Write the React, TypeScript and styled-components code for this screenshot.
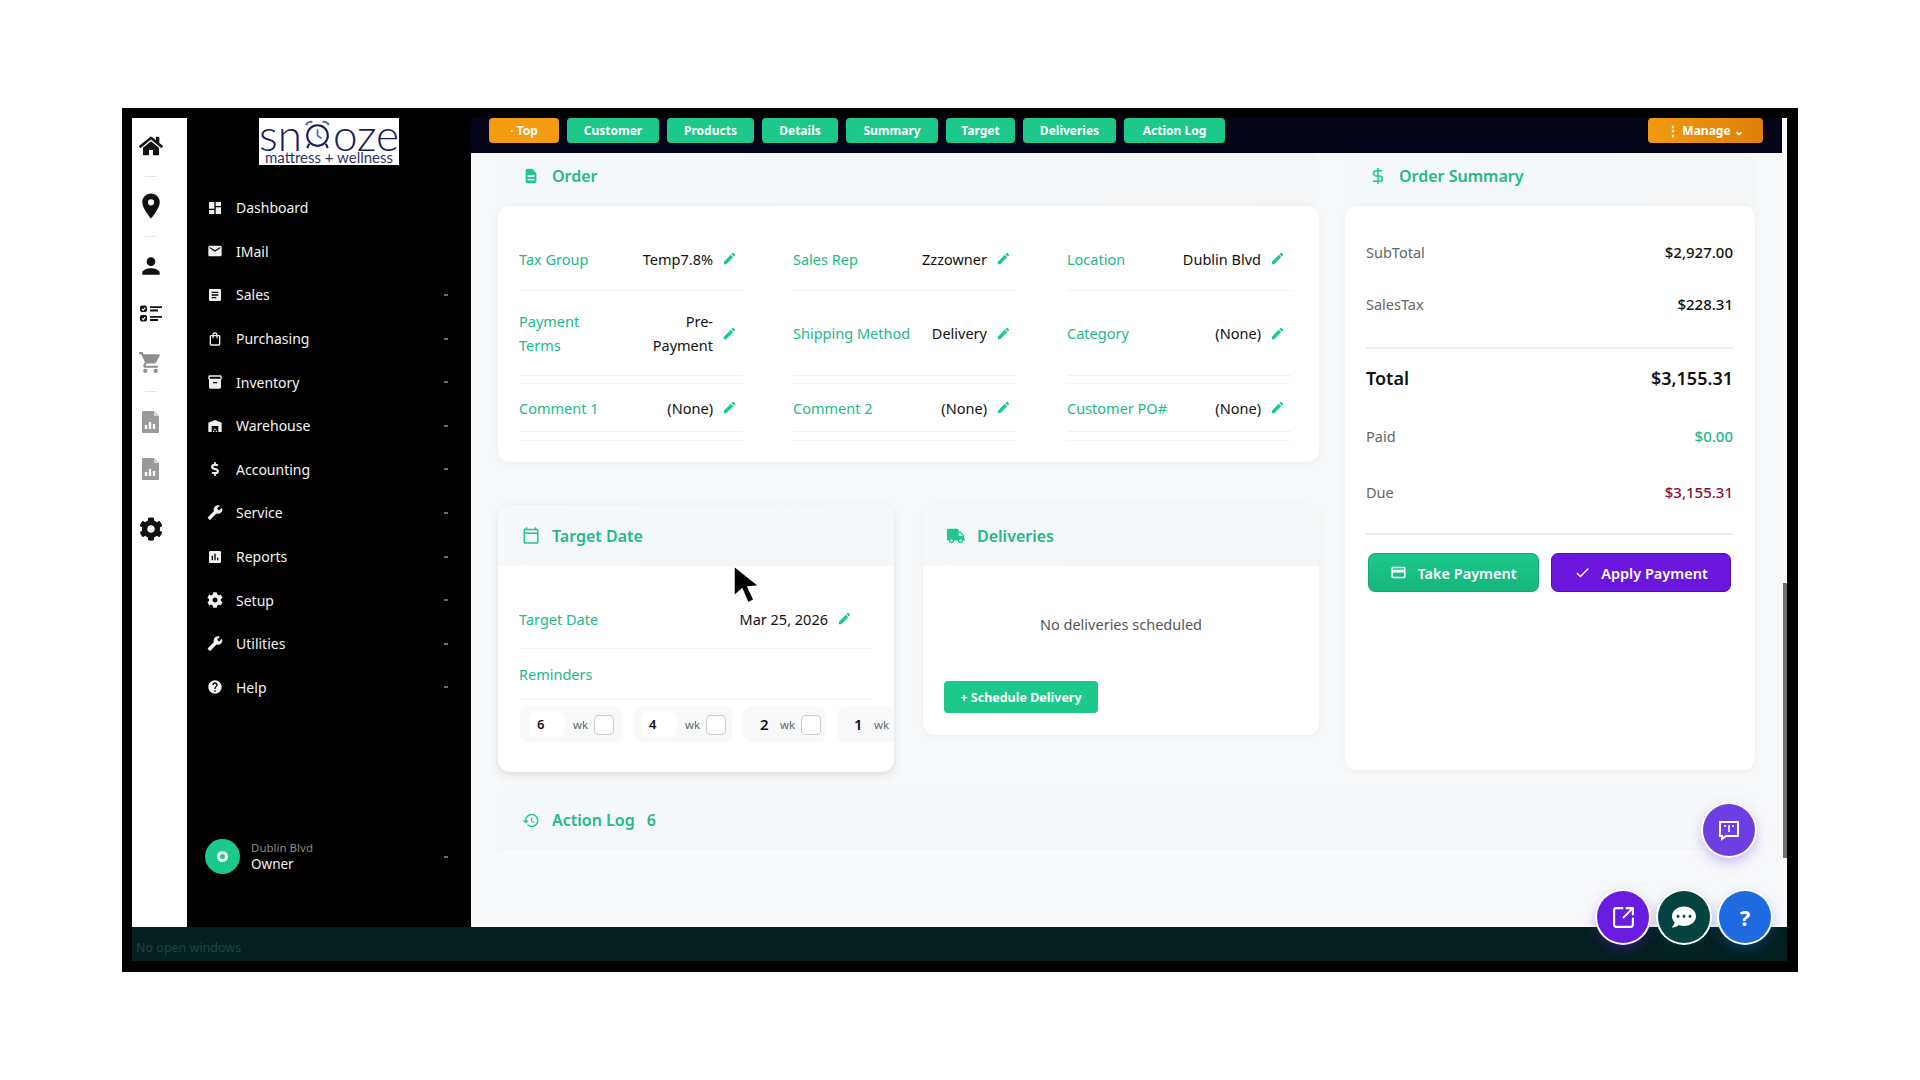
import React from "react";
import styled, { createGlobalStyle } from "styled-components";
import {
  MdDashboard, MdEmail, MdArticle, MdOutlineShoppingBag, MdInventory2, MdWarehouse, MdBuild,
  MdAssessment, MdHelp, MdEdit, MdShoppingCart, MdLocationOn, MdPerson, MdHistory, MdCreditCard,
  MdCheck, MdOutlineCalendarToday,
} from "react-icons/md";
import { FaCog, FaHome, FaTruck, FaDollarSign, FaCommentDots } from "react-icons/fa";
import { HiDocumentText } from "react-icons/hi";
import { LuDollarSign, LuSquareArrowOutUpRight } from "react-icons/lu";

const green = "#1cc88a";
const labelGreen = "#22b98a";
const font = `"Noto Sans", "Open Sans", sans-serif`;

const Global = createGlobalStyle`
  html, body { margin: 0; padding: 0; background: #fff; overflow: hidden; }
  body { font-family: ${font}; }
  * { box-sizing: border-box; }
`;

const Page = styled.div`
  width: 1920px;
  height: 1080px;
  padding: 108px 0 0 122px;
  background: #fff;
`;
const Frame = styled.div`
  position: relative;
  width: 1676px;
  height: 864px;
  padding: 10px 11px 11px 10px;
  background: #000;
  display: flex;
  flex-direction: column;
`;
const Upper = styled.div`
  display: flex;
  height: 809px;
`;
const Rail = styled.nav`
  width: 55px;
  background: #fff;
  display: flex;
  flex-direction: column;
  align-items: center;
  padding-right: 18px;
`;
const RailIcon = styled.div<{ $top: number; $faded?: boolean }>`
  margin-top: ${(p) => p.$top}px;
  height: 26px;
  display: flex;
  align-items: center;
  justify-content: center;
  color: ${(p) => (p.$faded ? "#8e8e8e" : "#111")};
`;
const RailRule = styled.div<{ $top: number }>`
  margin-top: ${(p) => p.$top}px;
  width: 12px;
  height: 1px;
  background: #e6e6e6;
`;
const Sidebar = styled.aside`
  width: 284px;
  background: #000;
  display: flex;
  flex-direction: column;
`;
const Logo = styled.div`
  align-self: flex-start;
  margin: 0 0 21px 72px;
  width: 140px;
  height: 47px;
  background: #fff;
  color: #1b1b5c;
  display: flex;
  flex-direction: column;
  align-items: center;
  overflow: hidden;
`;
const LogoWord = styled.div`
  display: flex;
  align-items: center;
  height: 32px;
  font: 300 44px/32px Lato, sans-serif;
`;
const LogoTag = styled.div`
  font: 400 15px/15px Lato, sans-serif;
  color: #33335f;
`;
const Menu = styled.ul`
  list-style: none;
  margin: 0;
  padding: 0;
`;
const MenuItem = styled.li`
  height: 43.6px;
  display: flex;
  align-items: center;
  padding: 0 23px 0 20px;
  color: #f4f4f4;
  font-size: 14px;
`;
const MenuIcon = styled.span`
  width: 16px;
  margin-right: 13px;
  display: flex;
  align-items: center;
  justify-content: center;
  color: #f0f0f0;
`;
const MenuLabel = styled.span`
  flex: 1;
`;
const Caret = styled.span`
  width: 4px;
  height: 2px;
  background: #6b6b6b;
`;
const UserBox = styled.div`
  margin-top: auto;
  padding: 0 23px 53px 18px;
  display: flex;
  align-items: center;
`;
const Avatar = styled.div`
  width: 35px;
  height: 35px;
  border-radius: 50%;
  background: ${green};
  display: flex;
  align-items: center;
  justify-content: center;
  margin-right: 11px;
`;
const AvatarDot = styled.div`
  width: 11px;
  height: 11px;
  border-radius: 50%;
  border: 3px solid #fff;
`;
const UserText = styled.div`
  flex: 1;
  display: flex;
  flex-direction: column;
`;
const UserPlace = styled.span`
  font-size: 11.5px;
  line-height: 16px;
  color: #8b8b8b;
`;
const UserRole = styled.span`
  font-size: 13.5px;
  line-height: 17px;
  color: #efefef;
`;
const Main = styled.main`
  flex: 1;
  min-width: 0;
  background: #f8f9fa;
  display: flex;
  flex-direction: column;
  border-bottom: 2px solid #fff;
  position: relative;
`;
const ScrollThumb = styled.div`
  position: absolute;
  right: 0;
  top: 465px;
  width: 4px;
  height: 275px;
  background: #6f6f6f;
`;
const TopBar = styled.header`
  height: 35px;
  margin-right: 5px;
  background: #05051a;
  display: flex;
  align-items: flex-start;
  padding-left: 18px;
  padding-right: 19px;
  gap: 8px;
`;
const NavButton = styled.button<{ $w: number; $orange?: boolean }>`
  width: ${(p) => p.$w}px;
  height: 25px;
  border: 0;
  border-radius: 4px;
  padding: 0;
  background: ${(p) => (p.$orange ? "#f39c12" : green)};
  color: #fff;
  font: 700 12px/25px ${font};
  text-align: center;
`;
const ManageButton = styled(NavButton)`
  margin-left: auto;
  background: linear-gradient(90deg, #f09a10, #dd800a);
`;
const Content = styled.div`
  flex: 1;
  padding: 0 27px;
  display: grid;
  grid-template-columns: 821px 410px;
  grid-template-rows: 309px 310px 1fr;
  column-gap: 26px;
  align-content: start;
`;
const OrderCard = styled.section`
  grid-column: 1;
  grid-row: 1;
  height: 309px;
`;
const SummaryCard = styled.section`
  grid-column: 2;
  grid-row: 1 / span 2;
  height: 617px;
  display: flex;
  flex-direction: column;
`;
const CardHead = styled.div<{ $h?: number; $nudge?: number }>`
  height: ${(p) => p.$h ?? 53}px;
  padding: 0 0 ${(p) => p.$nudge ?? 0}px 24px;
  background: linear-gradient(90deg, #f5f9fb, #f4f6f8);
  color: ${labelGreen};
  display: flex;
  align-items: center;
  font-size: 16px;
  font-weight: 600;
  border-radius: 12px 12px 0 0;
`;
const HeadIcon = styled.span`
  width: 18px;
  margin-right: 12px;
  display: flex;
  justify-content: center;
  color: ${green};
`;
const LogCount = styled.span`
  margin-left: 12px;
`;
const CardBody = styled.div`
  background: #fff;
  border-radius: 12px;
`;
const OrderBody = styled(CardBody)`
  height: 256px;
  padding: 21px 28px 0 21px;
  box-shadow: 0 1px 6px rgba(40, 50, 60, 0.06);
  display: grid;
  grid-template-columns: repeat(3, 224px);
  grid-template-rows: 64px 85px 56px;
  column-gap: 50px;
  align-items: stretch;
`;
const Field = styled.div<{ $last?: boolean }>`
  display: flex;
  align-items: center;
  padding-right: 6px;
  border-bottom: 1px solid #f1f2f4;
  font-size: 14.5px;
  ${(p) =>
    p.$last
      ? `margin-top: 7px; border-top: 1px solid #f4f5f6; box-shadow: 0 8px 0 0 #fff, 0 9px 0 0 #f4f5f6;`
      : ""}
`;
const Label = styled.span`
  color: ${labelGreen};
  line-height: 24px;
  white-space: pre-line;
  flex-shrink: 0;
`;
const Value = styled.span`
  flex: 1;
  text-align: right;
  color: #111;
  line-height: 24px;
  white-space: pre-line;
`;
const Pencil = styled.span`
  margin-left: 9px;
  width: 15px;
  display: flex;
  color: ${green};
`;
const LowerRow = styled.div`
  grid-column: 1;
  grid-row: 2;
  padding-top: 43px;
  display: grid;
  grid-template-columns: 396px 396px;
  column-gap: 29px;
  align-items: start;
`;
const TargetCard = styled.section`
  height: 267px;
  overflow: hidden;
  background: #fff;
  border-radius: 12px;
  box-shadow: 0 3px 10px rgba(40, 50, 60, 0.14);
`;
const DeliveriesCard = styled.section`
  height: 230px;
  background: #fff;
  border-radius: 12px;
  box-shadow: 0 1px 6px rgba(40, 50, 60, 0.06);
`;
const TargetField = styled.div`
  margin: 23px 21px 0 21px;
  height: 60px;
  display: flex;
  align-items: center;
  padding: 0 21px 0 0;
  font-size: 14.5px;
  border-bottom: 1px solid #f3f4f5;
`;
const ReminderLabel = styled.div`
  margin: 0 21px;
  height: 51px;
  display: flex;
  align-items: center;
  color: ${labelGreen};
  font-size: 14.5px;
  border-bottom: 1px solid #f1f2f4;
`;
const Chips = styled.div`
  margin: 7px 0 0 22px;
  display: flex;
  overflow: hidden;
  gap: 11px;
`;
const Chip = styled.div<{ $w: number; $pad: number }>`
  flex: 0 0 ${(p) => p.$w}px;
  height: 35px;
  padding-left: ${(p) => p.$pad}px;
  display: flex;
  align-items: center;
  background: #f7f9fa;
  border-radius: 8px;
`;
const NumBox = styled.span<{ $boxed?: boolean }>`
  width: ${(p) => (p.$boxed ? 35 : 15)}px;
  height: 25px;
  margin-right: ${(p) => (p.$boxed ? 8 : 9)}px;
  padding-left: ${(p) => (p.$boxed ? 7 : 4)}px;
  border-radius: 6px;
  background: ${(p) => (p.$boxed ? "#fff" : "transparent")};
  color: #111;
  font-size: ${(p) => (p.$boxed ? 13 : 15)}px;
  font-weight: 600;
  line-height: 25px;
`;
const Unit = styled.span`
  font-size: 11.5px;
  color: #666;
  margin-right: 6px;
`;
const CheckBox = styled.span`
  flex: 0 0 20px;
  width: 20px;
  height: 20px;
  border-radius: 4px;
  background: #fff;
  border: 1px solid #c9ced3;
`;
const EmptyText = styled.div`
  height: 115px;
  display: flex;
  align-items: center;
  justify-content: center;
  color: #555;
  font-size: 14.5px;
`;
const ScheduleButton = styled.button`
  display: block;
  margin: 0 0 0 21px;
  width: 154px;
  height: 32px;
  border: 0;
  border-radius: 4px;
  background: ${green};
  color: #fff;
  font: 700 12.5px ${font};
`;
const SummaryBody = styled(CardBody)`
  flex: 1;
  padding: 22px 22px 0 21px;
  box-shadow: 0 1px 6px rgba(40, 50, 60, 0.05);
`;
const SummaryRow = styled.div<{ $h: number; $rule?: boolean; $lift?: number }>`
  height: ${(p) => p.$h}px;
  padding-bottom: ${(p) => p.$lift ?? 0}px;
  display: flex;
  align-items: center;
  justify-content: space-between;
  ${(p) => (p.$rule ? "border-bottom: 2px solid #eceef0;" : "")}
`;
const SummaryLabel = styled.span<{ $big?: boolean }>`
  font-size: ${(p) => (p.$big ? 18 : 14.5)}px;
  font-weight: ${(p) => (p.$big ? 600 : 400)};
  color: ${(p) => (p.$big ? "#111" : "#666")};
`;
const SummaryValue = styled.span<{ $big?: boolean; $color?: string }>`
  font-size: ${(p) => (p.$big ? 18 : 15)}px;
  font-weight: ${(p) => (p.$big ? 600 : 500)};
  color: ${(p) => p.$color ?? "#111"};
`;
const PayRow = styled.div`
  display: flex;
  gap: 12px;
  margin-top: 18px;
  padding-left: 2px;
`;
const PayButton = styled.button<{ $purple?: boolean }>`
  height: 39px;
  width: ${(p) => (p.$purple ? 180 : 171)}px;
  border-radius: 7px;
  border: 1px solid ${(p) => (p.$purple ? "#4c12b0" : "#14a974")};
  background: ${(p) => (p.$purple ? "#6a16dc" : "linear-gradient(180deg,#1cc88a,#17b57c)")};
  color: #fff;
  font: 600 14.5px ${font};
  display: flex;
  align-items: center;
  justify-content: center;
  gap: 10px;
`;
const LogBar = styled(CardHead)`
  grid-column: 1 / span 2;
  grid-row: 3;
  margin-top: 20px;
  height: 56px;
  background: linear-gradient(90deg, #f5f9fb, #f6f8f9);
  box-shadow: 0 1px 3px rgba(40, 50, 60, 0.04);
`;
const BottomBar = styled.footer`
  height: 34px;
  background: #03201f;
  color: #1c4743;
  font-size: 12.5px;
  line-height: 34px;
  padding: 4px 0 0 4px;
`;
const Fab = styled.div<{ $x: number; $y: number; $bg: string }>`
  position: absolute;
  left: ${(p) => p.$x - 122 - 26}px;
  top: ${(p) => p.$y - 108 - 26}px;
  width: 52px;
  height: 52px;
  border-radius: 50%;
  background: ${(p) => p.$bg};
  box-shadow: 0 0 0 2px #fff, 0 5px 14px ${(p) => p.$bg}66;
  color: #fff;
  display: flex;
  align-items: center;
  justify-content: center;
  font: 700 22px ${font};
`;
const Cursor = styled.svg`
  position: absolute;
  left: ${732 - 122}px;
  top: ${565 - 108}px;
`;

const ReportIcon = () => (
  <svg width="20" height="24" viewBox="0 0 20 24" fill="none">
    <path d="M2 1h11l5 5v16a1 1 0 0 1-1 1H2a1 1 0 0 1-1-1V2a1 1 0 0 1 1-1z" fill="#9a9a9a" />
    <path d="M13 1l5 5h-5z" fill="#d5d5d5" />
    <path d="M5 19v-4M9 19v-7M13 19v-5" stroke="#fff" strokeWidth="2.4" />
  </svg>
);
const ChecklistIcon = () => (
  <svg width="24" height="20" viewBox="0 0 24 20" fill="none">
    <rect x="1" y="1.5" width="7" height="6.5" rx="2" fill="#111" />
    <rect x="1" y="11" width="7" height="6.5" rx="2" fill="#111" />
    <path d="M3 4.8l1.3 1.3 2-2.4M3 14.3l1.3 1.3 2-2.4" stroke="#fff" strokeWidth="1.2" />
    <path d="M11 3.2h12M11 6.5h8M11 12.8h12M11 16h8" stroke="#111" strokeWidth="1.8" />
  </svg>
);
const ClockO = () => (
  <svg width="31" height="31" viewBox="0 0 30 30" fill="none" stroke="#1b1b5c">
    <circle cx="15" cy="16" r="10" strokeWidth="2" />
    <path d="M15 10v6l4 3" strokeWidth="1.6" stroke="#3f6fc4" />
    <path d="M4 6a5 5 0 0 1 6-3M26 6a5 5 0 0 0-6-3" strokeWidth="2" stroke="#3f6fc4" />
    <path d="M7 24l-2 4M23 24l2 4" strokeWidth="2" />
  </svg>
);

const menu: [string, React.ReactNode, boolean][] = [
  ["Dashboard", <MdDashboard size={18} />, false],
  ["IMail", <MdEmail size={18} />, false],
  ["Sales", <MdArticle size={18} />, true],
  ["Purchasing", <MdOutlineShoppingBag size={18} />, true],
  ["Inventory", <MdInventory2 size={18} />, true],
  ["Warehouse", <MdWarehouse size={18} />, true],
  ["Accounting", <FaDollarSign size={14} />, true],
  ["Service", <MdBuild size={19} style={{ transform: "scaleX(-1)" }} />, true],
  ["Reports", <MdAssessment size={18} />, true],
  ["Setup", <FaCog size={16} />, true],
  ["Utilities", <MdBuild size={19} style={{ transform: "scaleX(-1)" }} />, true],
  ["Help", <MdHelp size={18} />, true],
];
const navItems: [string, number][] = [
  ["Customer", 92], ["Products", 87], ["Details", 76], ["Summary", 92],
  ["Target", 69], ["Deliveries", 93], ["Action Log", 101],
];
const fields: [string, string][] = [
  ["Tax Group", "Temp7.8%"], ["Sales Rep", "Zzzowner"], ["Location", "Dublin Blvd"],
  ["Payment\nTerms", "Pre-\nPayment"], ["Shipping Method", "Delivery"], ["Category", "(None)"],
  ["Comment 1", "(None)"], ["Comment 2", "(None)"], ["Customer PO#", "(None)"],
];
const chips: { n: string; w: number; pad: number; boxed: boolean }[] = [
  { n: "6", w: 103, pad: 10, boxed: true },
  { n: "4", w: 98, pad: 8, boxed: true },
  { n: "2", w: 83, pad: 13, boxed: false },
  { n: "1", w: 83, pad: 13, boxed: false },
];

export default function App() {
  return (
    <Page>
      <Global />
      <Frame>
        <Upper>
          <Rail>
            <RailIcon $top={15}><FaHome size={24} /></RailIcon>
            <RailRule $top={17} />
            <RailIcon $top={16}><MdLocationOn size={30} /></RailIcon>
            <RailRule $top={17} />
            <RailIcon $top={16}><MdPerson size={26} /></RailIcon>
            <RailIcon $top={22}><ChecklistIcon /></RailIcon>
            <RailIcon $top={22} $faded><MdShoppingCart size={25} /></RailIcon>
            <RailRule $top={16} />
            <RailIcon $top={17} $faded><ReportIcon /></RailIcon>
            <RailIcon $top={21} $faded><ReportIcon /></RailIcon>
            <RailIcon $top={34}><FaCog size={24} /></RailIcon>
          </Rail>
          <Sidebar>
            <Logo>
              <LogoWord>sn<ClockO />oze</LogoWord>
              <LogoTag>mattress + wellness</LogoTag>
            </Logo>
            <Menu>
              {menu.map(([name, icon, caret]) => (
                <MenuItem key={name}>
                  <MenuIcon>{icon}</MenuIcon>
                  <MenuLabel>{name}</MenuLabel>
                  {caret && <Caret />}
                </MenuItem>
              ))}
            </Menu>
            <UserBox>
              <Avatar><AvatarDot /></Avatar>
              <UserText>
                <UserPlace>Dublin Blvd</UserPlace>
                <UserRole>Owner</UserRole>
              </UserText>
              <Caret />
            </UserBox>
          </Sidebar>
          <Main>
            <TopBar>
              <NavButton $w={70} $orange>· Top</NavButton>
              {navItems.map(([t, w]) => (
                <NavButton key={t} $w={w}>{t}</NavButton>
              ))}
              <ManageButton $w={115} $orange>⋮ Manage ⌄</ManageButton>
            </TopBar>
            <Content>
              <OrderCard>
                <CardHead $nudge={7}>
                  <HeadIcon><HiDocumentText size={20} /></HeadIcon>Order
                </CardHead>
                <OrderBody>
                  {fields.map(([l, v], i) => (
                    <Field key={l} $last={i >= 6}>
                      <Label>{l}</Label>
                      <Value>{v}</Value>
                      <Pencil><MdEdit size={15} /></Pencil>
                    </Field>
                  ))}
                </OrderBody>
              </OrderCard>
              <SummaryCard>
                <CardHead $nudge={7}>
                  <HeadIcon><LuDollarSign size={18} /></HeadIcon>Order Summary
                </CardHead>
                <SummaryBody>
                  <SummaryRow $h={48}><SummaryLabel>SubTotal</SummaryLabel><SummaryValue>$2,927.00</SummaryValue></SummaryRow>
                  <SummaryRow $h={73} $rule $lift={16}><SummaryLabel>SalesTax</SummaryLabel><SummaryValue>$228.31</SummaryValue></SummaryRow>
                  <SummaryRow $h={58}><SummaryLabel $big>Total</SummaryLabel><SummaryValue $big>$3,155.31</SummaryValue></SummaryRow>
                  <SummaryRow $h={58}><SummaryLabel>Paid</SummaryLabel><SummaryValue $color="#22b98a">$0.00</SummaryValue></SummaryRow>
                  <SummaryRow $h={70} $rule $lift={14}><SummaryLabel>Due</SummaryLabel><SummaryValue $color="#8a0f3c">$3,155.31</SummaryValue></SummaryRow>
                  <PayRow>
                    <PayButton><MdCreditCard size={17} />Take Payment</PayButton>
                    <PayButton $purple><MdCheck size={17} />Apply Payment</PayButton>
                  </PayRow>
                </SummaryBody>
              </SummaryCard>
              <LowerRow>
                <TargetCard>
                  <CardHead $h={61}>
                    <HeadIcon><MdOutlineCalendarToday size={19} /></HeadIcon>Target Date
                  </CardHead>
                  <TargetField>
                    <Label>Target Date</Label>
                    <Value>Mar 25, 2026</Value>
                    <Pencil><MdEdit size={15} /></Pencil>
                  </TargetField>
                  <ReminderLabel>Reminders</ReminderLabel>
                  <Chips>
                    {chips.map((c) => (
                      <Chip key={c.n} $w={c.w} $pad={c.pad}>
                        <NumBox $boxed={c.boxed}>{c.n}</NumBox>
                        <Unit>wk</Unit>
                        <CheckBox />
                      </Chip>
                    ))}
                  </Chips>
                </TargetCard>
                <DeliveriesCard>
                  <CardHead $h={61}>
                    <HeadIcon><FaTruck size={20} /></HeadIcon>Deliveries
                  </CardHead>
                  <EmptyText>No deliveries scheduled</EmptyText>
                  <ScheduleButton>+ Schedule Delivery</ScheduleButton>
                </DeliveriesCard>
              </LowerRow>
              <LogBar>
                <HeadIcon><MdHistory size={21} /></HeadIcon>Action Log<LogCount>6</LogCount>
              </LogBar>
            </Content>
            <ScrollThumb />
          </Main>
        </Upper>
        <BottomBar>No open windows</BottomBar>
        <Fab $x={1729} $y={830} $bg="#6d3fe0">
          <svg width="22" height="22" viewBox="0 0 22 22" fill="none" stroke="#fff" strokeWidth="2">
            <path d="M2 3h18v14H8l-4 3v-3H2z" />
            <path d="M11 6v7M6 7h2M14 7h2" strokeWidth="1.6" />
          </svg>
        </Fab>
        <Fab $x={1623} $y={917} $bg="#6a1be0"><LuSquareArrowOutUpRight size={25} /></Fab>
        <Fab $x={1684} $y={917} $bg="#04433f"><FaCommentDots size={24} /></Fab>
        <Fab $x={1745} $y={917} $bg="#1f6ae0">?</Fab>
        <Cursor width="32" height="42" viewBox="0 0 32 42">
          <path d="M2 1l0 30 8-7 6 14 6-3-6-13 11-1z" fill="#000" stroke="#fff" strokeWidth="1.5" />
        </Cursor>
      </Frame>
    </Page>
  );
}
